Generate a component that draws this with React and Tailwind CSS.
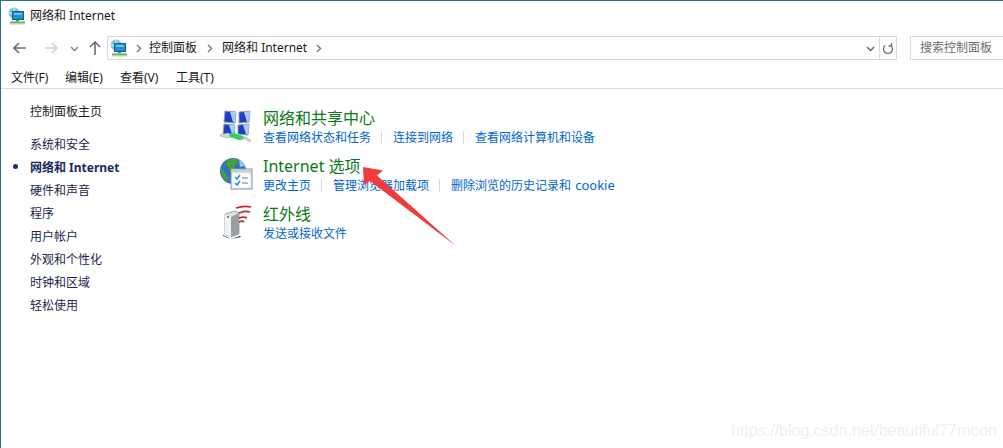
import React from "react";

const font = { fontFamily: '"Noto Sans", "Noto Sans CJK SC", sans-serif' };

function NetIcon({ size = 18 }) {
  return (
    <svg width={size} height={size} viewBox="0 0 18 18">
      <circle cx="6" cy="6" r="5.5" fill="#7fc4dc" />
      <path d="M1 6h9M6 1v9" stroke="#d4eef6" strokeWidth="1" />
      <rect x="4.5" y="4.5" width="11" height="8" fill="#1f8fd0" stroke="#1a5f8c" />
      <rect x="6" y="6" width="8" height="2" fill="#6cc0ea" />
      <rect x="8" y="13" width="3" height="1.5" fill="#3aa63a" />
      <rect x="2" y="14.5" width="15" height="2" fill="#55b955" />
      <rect x="2" y="16.5" width="15" height="1" fill="#c8c8c8" />
    </svg>
  );
}

function NetworkCenterIcon() {
  return (
    <svg width="34" height="34" viewBox="0 0 34 34">
      <path d="M6 2l11 1-1 11-11-1z" fill="#1c3fc4" stroke="#8ca0b8" />
      <path d="M20 3l11-1-1 11-10 1z" fill="#1c3fc4" stroke="#8ca0b8" />
      <path d="M5 15l11 1-1 10-11-1z" fill="#1c3fc4" stroke="#8ca0b8" />
      <path d="M19 16l11-1-1 11-10-1z" fill="#1c3fc4" stroke="#8ca0b8" />
      <path d="M11 3l6 0-1 10-2 0zM25 3l6-1-1 10-2 1zM10 16l6 0-1 9-2 0zM24 16l6-1-1 10-2 0z" fill="#a9cdf0" />
      <path d="M1 27l7 2 4-1 8 3 6-1 5 3 1-2-6-3-7-1-10-3-8 2z" fill="#d4dade" stroke="#8f99a2" strokeWidth="0.5" />
      <path d="M10 25l5-1 9 3 1 2-4 2-10-3z" fill="#2fd45a" />
    </svg>
  );
}

function OptionsIcon() {
  return (
    <svg width="34" height="34" viewBox="0 0 34 34">
      <circle cx="14" cy="14" r="13" fill="#2f74b8" />
      <path d="M9 3c3-1.500 6-2 9-1l1 4-4 3 1 4-3 3-3-3-1-4-3-2zM2 12l3 1 2 5 2 3-1 3c-3-2-6-7-6-12zM17 20l4 1-2 6-3-2z" fill="#4b9f3a" />
      <path d="M20 3c3 1 5 3 6 6l-5 1z" fill="#8fc9ea" />
      <rect x="12" y="12" width="21" height="20" fill="#eef2f5" stroke="#8a9299" />
      <rect x="12.500" y="12.500" width="20" height="3" fill="#c5ccd3" />
      <rect x="14.500" y="17" width="16" height="13" fill="#fbfcfd" />
      <path d="M16 20l2 2 3-4M16 26l2 2 3-4" fill="none" stroke="#1f9ad6" strokeWidth="1.6" />
      <path d="M23 21h6M23 26h6" stroke="#6e7880" strokeWidth="1.2" />
    </svg>
  );
}

function InfraredIcon() {
  return (
    <svg width="34" height="34" viewBox="0 0 34 34">
      <path d="M6 9l10-3 4 2v21l-8 3-6-3z" fill="#dfe1e2" stroke="#80868b" strokeWidth="0.7" />
      <path d="M12 12l8-4v21l-8 3z" fill="#9a9fa2" />
      <path d="M6 9l6 3v20l-6-3z" fill="#f0f1f2" />
      <path d="M4 30l8 4 9-3 1 1-10 2-8-3z" fill="#222" />
      <circle cx="9" cy="12" r="1.2" fill="#4aa84a" />
      <path d="M17 3c6-2 11-2 15-1M20 8c4-2 8-2 11-1M20 13c3-1 6-1 8 0M20 17c2-1 4-1 5 0" fill="none" stroke="#c9272b" strokeWidth="1.8" />
    </svg>
  );
}

function Chevron() {
  return (
    <svg width="6" height="9" viewBox="0 0 6 9" fill="none" stroke="#808080" strokeWidth="1.5">
      <path d="M1 1l3.5 3.5L1 8" />
    </svg>
  );
}

const sideLinks = ["系统和安全", "网络和 Internet", "硬件和声音", "程序", "用户帐户", "外观和个性化", "时钟和区域", "轻松使用"];

const sections = [
  { title: "网络和共享中心", icon: <NetworkCenterIcon />, links: ["查看网络状态和任务", "连接到网络", "查看网络计算机和设备"] },
  {
    title: "Internet 选项",
    icon: <OptionsIcon />,
    links: ["更改主页", "管理浏览器加载项", <>删除浏览的历史记录和 <span className="text-[13px] ml-[1px]">cookie</span></>],
  },
  { title: "红外线", icon: <InfraredIcon />, links: ["发送或接收文件"] },
];

export default function App() {
  return (
    <div className="relative w-[1003px] h-[448px] overflow-hidden bg-white border-t border-l border-[#2f6a94] text-[12px] text-[#1a1a1a]" style={font}>
      <div className="flex items-center h-[29px] pt-[1px] pl-[7px] gap-[4px]">
        <NetIcon />
        <span>网络和 Internet</span>
      </div>

      <div className="flex items-center h-[24px] mt-[6px]">
        <div className="flex items-center w-[106px] pl-[12px]">
          <svg width="14" height="14" viewBox="0 0 14 14" fill="none" stroke="#6d6d6d" strokeWidth="1.6">
            <path d="M13 7H1M6 2L1 7l5 5" />
          </svg>
          <svg className="ml-[17px]" width="14" height="14" viewBox="0 0 14 14" fill="none" stroke="#d0d0d0" strokeWidth="1.6">
            <path d="M1 7h12M8 2l5 5-5 5" />
          </svg>
          <svg className="ml-[12px]" width="9" height="9" viewBox="0 0 9 9" fill="none" stroke="#808080" strokeWidth="1.4">
            <path d="M1 3l3.5 3.5L8 3" />
          </svg>
          <svg className="ml-[9px]" width="14" height="14" viewBox="0 0 14 14" fill="none" stroke="#6d6d6d" strokeWidth="1.6">
            <path d="M7 14V1M2 6l5-5 5 5" />
          </svg>
        </div>
        <div className="flex items-center w-[790px] h-[24px] border border-[#d9d9d9]">
          <div className="ml-[2px]"><NetIcon /></div>
          <div className="ml-[8px]"><Chevron /></div>
          <span className="ml-[7px]">控制面板</span>
          <div className="ml-[10px]"><Chevron /></div>
          <span className="ml-[9px]">网络和 Internet</span>
          <div className="ml-[9px]"><Chevron /></div>
          <div className="flex items-center justify-center ml-auto h-full w-[17px]">
            <svg width="9" height="9" viewBox="0 0 9 9" fill="none" stroke="#606060" strokeWidth="1.3">
              <path d="M1 3l3.5 3.5L8 3" />
            </svg>
          </div>
          <div className="flex items-center justify-center h-full w-[17px] border-l border-[#d9d9d9]">
            <svg width="12" height="13" viewBox="0 0 12 13" fill="none" stroke="#707070" strokeWidth="1.3">
              <path d="M3 3.5a4.5 4.5 0 1 0 6 0M9.5 1v3H6.5" />
            </svg>
          </div>
        </div>
        <div className="flex items-center w-[93px] h-[24px] ml-[13px] pl-[9px] border border-r-0 border-[#d9d9d9] text-[#6d6d6d]">搜索控制面板</div>
      </div>

      <div className="flex items-center h-[29px] pt-[8px] border-b border-[#dcdcdc] pl-[10px]">
        <span className="w-[54px]">文件(F)</span>
        <span className="w-[55px]">编辑(E)</span>
        <span className="w-[56px]">查看(V)</span>
        <span>工具(T)</span>
      </div>

      <div className="flex">
        <div className="w-[218px] pl-[29px] pt-[13px]">
          <div className="h-[23px] leading-[20px]">控制面板主页</div>
          <div className="mt-[8px]">
            {sideLinks.map((name) => {
              const active = name === "网络和 Internet";
              return (
                <div key={name} className={`relative h-[23px] leading-[23px] ${active ? "font-bold text-[#1a2a5c]" : "text-[#20264a]"}`}>
                  {active && <span className="absolute left-[-17px] top-[8px] w-[5px] h-[5px] rounded-full bg-[#1a2a6c]"></span>}
                  {name}
                </div>
              );
            })}
          </div>
        </div>

        <div className="pt-[19px] flex flex-col gap-[10px]">
          {sections.map((s) => (
            <div key={s.title} className="flex h-[38px]">
              <div className="w-[44px] pt-[1px]">{s.icon}</div>
              <div>
                <div className="text-[16px] leading-[20px] text-[#0a7a14]">{s.title}</div>
                <div className="flex items-center leading-[18px] mt-[3px] text-[#0066cc]">
                  {s.links.map((l, i) => (
                    <span key={i} className={i > 0 ? "ml-[10px] pl-[11px] border-l border-[#d9d9d9] leading-[13px]" : "leading-[13px]"}>{l}</span>
                  ))}
                </div>
              </div>
            </div>
          ))}
        </div>
      </div>

      <svg className="absolute left-[351px] top-[155px]" width="115" height="95" viewBox="0 0 115 95">
        <path d="M11 11L31 14.5L25 19.5L104 90L18 25L12 29Z" fill="#ee3b3b" />
      </svg>

      <div className="absolute left-[730px] top-[418px] text-[16px] text-[#efefef]" style={{ fontFamily: '"Liberation Sans", sans-serif' }}>
        https://blog.csdn.net/beautiful77moon
      </div>
    </div>
  );
}
